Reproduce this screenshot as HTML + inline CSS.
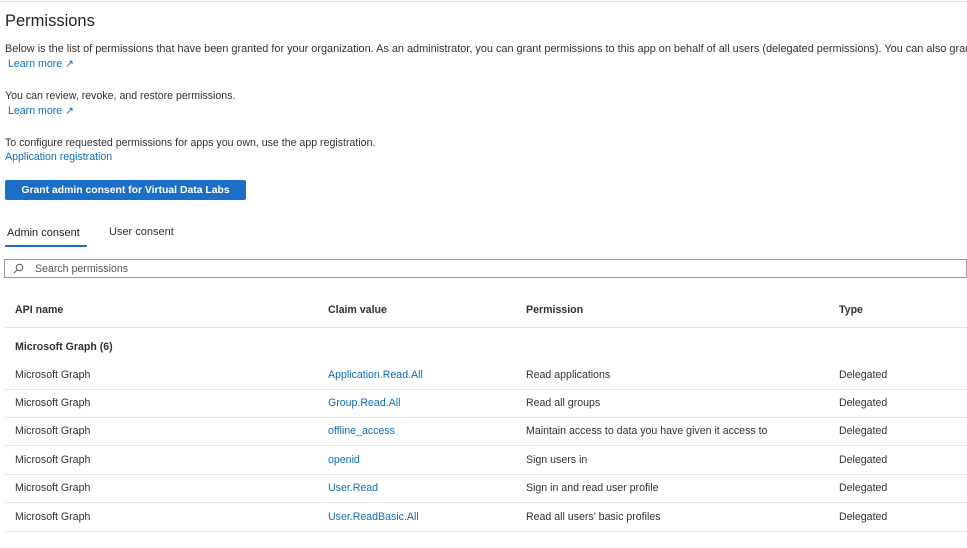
<!DOCTYPE html><html><head><style>
body{margin:0;width:967px;height:548px;overflow:hidden;background:#fff;font-family:"Liberation Sans",sans-serif;color:#323130;font-size:10.6px;position:relative}
.a{position:absolute;white-space:nowrap}
.l{color:#0f6cbd}
.row{position:absolute;left:5px;width:962px;height:28px;border-bottom:1px solid #e5e5e5}
.row span{position:absolute;top:8px}
</style></head><body>
<div class="a" style="left:0;top:1px;width:967px;height:1px;background:#e1e1e1"></div>
<div class="a" style="left:5px;top:12px;font-size:16.5px;color:#242424">Permissions</div>
<div class="a" style="left:5px;top:43px;font-size:10.9px">Below is the list of permissions that have been granted for your organization. As an administrator, you can grant permissions to this app on behalf of all users (delegated permissions). You can also grant</div>
<div class="a l" style="left:8px;top:58px">Learn more &#x2197;&#xFE0E;</div>
<div class="a" style="left:5px;top:90px">You can review, revoke, and restore permissions.</div>
<div class="a l" style="left:8px;top:105px">Learn more &#x2197;&#xFE0E;</div>
<div class="a" style="left:5px;top:137px">To configure requested permissions for apps you own, use the app registration.</div>
<div class="a l" style="left:5px;top:151px">Application registration</div>
<div class="a" style="left:5px;top:180px;width:241px;height:20px;background:#1b6fc9;border-radius:2px;color:#fff;font-weight:bold;font-size:10.4px;display:flex;align-items:center;justify-content:center">Grant admin consent for Virtual Data Labs</div>
<div class="a" style="left:7px;top:227px;font-size:11px;color:#242424">Admin consent</div>
<div class="a" style="left:5px;top:245px;width:82px;height:2px;background:#1b6fc9"></div>
<div class="a" style="left:109px;top:226px;font-size:11px">User consent</div>
<div class="a" style="left:4px;top:259px;width:963px;height:19px;border:1px solid #999;box-sizing:border-box"></div>
<svg class="a" style="left:13px;top:263px" width="11" height="11" viewBox="0 0 11 11"><circle cx="6.5" cy="4.5" r="3.3" fill="none" stroke="#555" stroke-width="1"/><path d="M4.2 6.8L1 10" stroke="#555" stroke-width="1"/></svg>
<div class="a" style="left:35px;top:263px;color:#555">Search permissions</div>
<div class="row" style="top:296px;height:31px"><span style="left:10px;top:8px;font-weight:bold">API name</span><span style="left:323px;font-weight:bold">Claim value</span><span style="left:521px;font-weight:bold">Permission</span><span style="left:834px;font-weight:bold">Type</span></div>
<div class="a" style="left:15px;top:341px;font-weight:bold">Microsoft Graph (6)</div>
<div class="row" style="top:361px"><span style="left:10px">Microsoft Graph</span><span class="l" style="left:323px">Application.Read.All</span><span style="left:521px">Read applications</span><span style="left:834px">Delegated</span></div>
<div class="row" style="top:389px"><span style="left:10px">Microsoft Graph</span><span class="l" style="left:323px">Group.Read.All</span><span style="left:521px">Read all groups</span><span style="left:834px">Delegated</span></div>
<div class="row" style="top:417px"><span style="left:10px">Microsoft Graph</span><span class="l" style="left:323px">offline_access</span><span style="left:521px">Maintain access to data you have given it access to</span><span style="left:834px">Delegated</span></div>
<div class="row" style="top:446px"><span style="left:10px">Microsoft Graph</span><span class="l" style="left:323px">openid</span><span style="left:521px">Sign users in</span><span style="left:834px">Delegated</span></div>
<div class="row" style="top:474px"><span style="left:10px">Microsoft Graph</span><span class="l" style="left:323px">User.Read</span><span style="left:521px">Sign in and read user profile</span><span style="left:834px">Delegated</span></div>
<div class="row" style="top:503px"><span style="left:10px">Microsoft Graph</span><span class="l" style="left:323px">User.ReadBasic.All</span><span style="left:521px">Read all users' basic profiles</span><span style="left:834px">Delegated</span></div>
</body></html>
